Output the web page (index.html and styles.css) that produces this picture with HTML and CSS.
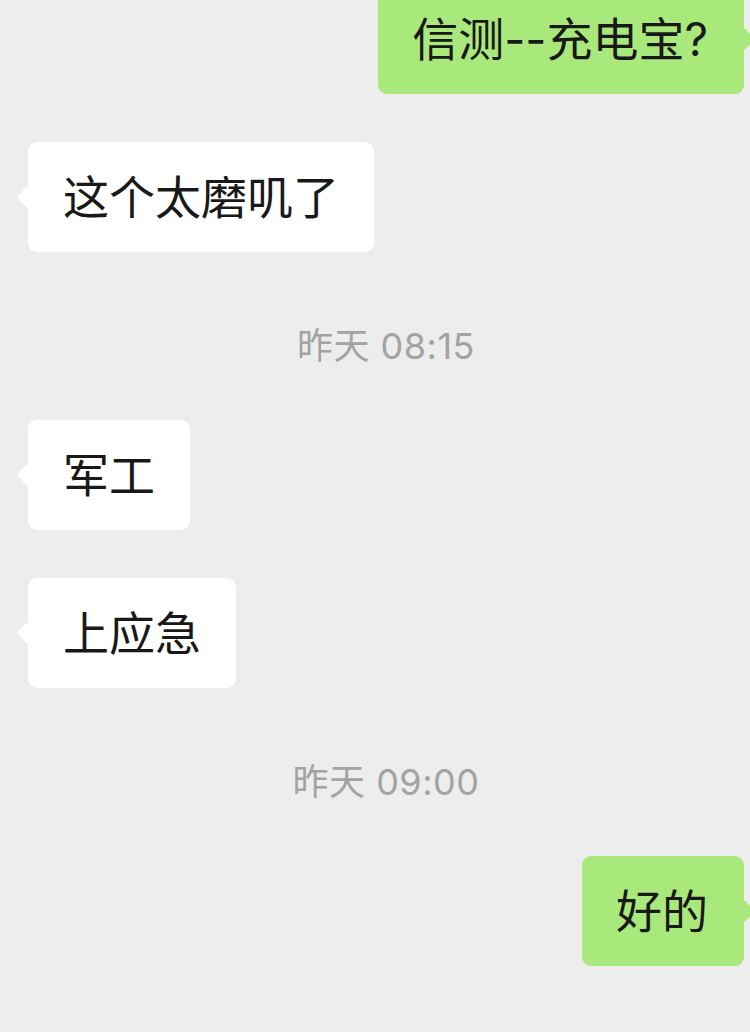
FILE: index.html
```html
<!DOCTYPE html>
<html lang="zh-CN">
<head>
    <meta charset="UTF-8">
    <meta name="viewport" content="width=device-width, initial-scale=1.0">
    <title>聊天</title>
    <link rel="stylesheet" href="styles.css">
</head>
<body>
    <div class="chat">
        <div class="row me first">
            <div class="bubble">信测--充电宝?</div>
        </div>
        <div class="row">
            <div class="bubble">这个太磨叽了</div>
        </div>
        <div class="time">昨天 08:15</div>
        <div class="row">
            <div class="bubble">军工</div>
        </div>
        <div class="row">
            <div class="bubble">上应急</div>
        </div>
        <div class="time">昨天 09:00</div>
        <div class="row me">
            <div class="bubble">好的</div>
        </div>
    </div>
</body>
</html>
```

FILE: styles.css
```css
body {
    margin: 0;
    background: #ededed;
    font-family: Inter, "Noto Sans CJK SC", sans-serif;
    color: #191919;
    overflow: hidden;
}
.chat {
    display: flex;
    flex-direction: column;
    padding: 0 6px 0 28px;
}
.row {
    display: flex;
    margin-top: 48px;
}
.row.first {
    margin-top: -16px;
}
.row.me {
    justify-content: flex-end;
}
.bubble {
    position: relative;
    background: #ffffff;
    border-radius: 9px;
    padding: 30px 35px 30px 35px;
    font-size: 46px;
    line-height: 50px;
}
.bubble::before {
    content: "";
    position: absolute;
    top: 47px;
    left: -8px;
    width: 16px;
    height: 16px;
    background: inherit;
    border-radius: 2px;
    transform: rotate(45deg);
}
.me .bubble {
    background: #a9e97b;
    padding: 30px 36px 30px 34px;
}
.me .bubble::before {
    left: auto;
    right: -8px;
}
.time {
    margin-top: 74px;
    text-align: center;
    font-size: 36px;
    line-height: 40px;
    letter-spacing: 0.5px;
    color: #a3a3a3;
}
.time + .row {
    margin-top: 54px;
}
```
